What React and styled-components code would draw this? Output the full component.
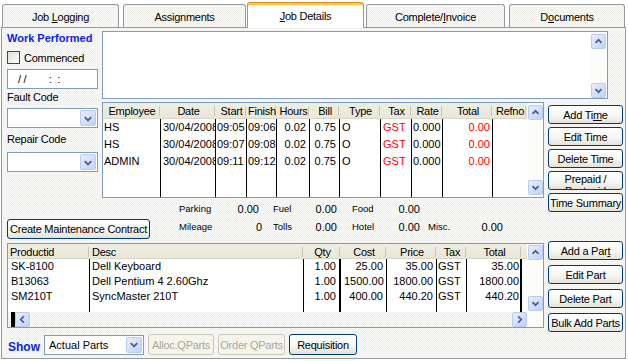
import React from 'react';
import styled, { createGlobalStyle } from 'styled-components';

const GlobalStyle = createGlobalStyle`
  html, body { margin: 0; padding: 0; background: #ffffff; }
  body { font-family: 'Liberation Sans', Arial, sans-serif; font-size: 11px; color: #000; }
`;

const dotted = 'repeating-conic-gradient(#eeede7 0% 25%, #fbfbf9 0% 50%) 0 0 / 2px 2px';

const timeCols = [
  { label: 'Employee', w: 58, align: 'left', pad: 1, line: 1 },
  { label: 'Date', w: 55, align: 'left', pad: 2, line: 1 },
  { label: 'Start', w: 31, align: 'left', pad: 1, line: 1 },
  { label: 'Finish', w: 30, align: 'left', pad: 1, line: 1 },
  { label: 'Hours', w: 33, align: 'right', pad: 3, line: 1 },
  { label: 'Bill', w: 30, align: 'right', pad: 3, line: 1 },
  { label: 'Type', w: 41, align: 'left', pad: 2, line: 1 },
  { label: 'Tax', w: 31, align: 'left', pad: 2, line: 1, color: '#ff0000' },
  { label: 'Rate', w: 31, align: 'left', pad: 1, line: 1 },
  { label: 'Total', w: 50, align: 'right', pad: 2, line: 1, color: '#ff0000' },
  { label: 'Refno', w: 34, align: 'left', pad: 2, line: 0 },
];

const timeRows = [
  ['HS', '30/04/2008', '09:05', '09:06', '0.02', '0.75', 'O', 'GST', '0.000', '0.00', ''],
  ['HS', '30/04/2008', '09:07', '09:08', '0.02', '0.75', 'O', 'GST', '0.000', '0.00', ''],
  ['ADMIN', '30/04/2008', '09:11', '09:12', '0.02', '0.75', 'O', 'GST', '0.000', '0.00', ''],
];

const partCols = [
  { label: 'Productid', w: 82, align: 'left', hAlign: 'left', pad: 3, line: 1 },
  { label: 'Desc', w: 214, align: 'left', hAlign: 'left', pad: 2, line: 1 },
  { label: 'Qty', w: 37, align: 'right', pad: 3, line: 2 },
  { label: 'Cost', w: 46, align: 'right', pad: 3, line: 1 },
  { label: 'Price', w: 50, align: 'right', pad: 3, line: 1 },
  { label: 'Tax', w: 30, align: 'left', pad: 1, line: 1 },
  { label: 'Total', w: 55, align: 'right', pad: 1, line: 2 },
  { label: '', w: 6, align: 'left', pad: 0, line: 0 },
];

const partRows = [
  ['SK-8100', 'Dell Keyboard', '1.00', '25.00', '35.00', 'GST', '35.00', ''],
  ['B13063', 'Dell Pentium 4 2.60Ghz', '1.00', '1500.00', '1800.00', 'GST', '1800.00', ''],
  ['SM210T', 'SyncMaster 210T', '1.00', '400.00', '440.20', 'GST', '440.20', ''],
];

const Chevron = ({ dir }) => {
  const pts = {
    up: '4,9 7.5,5.5 11,9',
    down: '4,6 7.5,9.5 11,6',
    left: '9,4 5.5,7.5 9,11',
    right: '6,4 9.5,7.5 6,11',
  }[dir];
  return (
    <svg width="15" height="15" viewBox="0 0 15 15">
      <polyline points={pts} fill="none" stroke="#4d6185" strokeWidth="2" />
    </svg>
  );
};

const Root = styled.div`
  width: 628px;
  height: 361px;
  overflow: hidden;
  background: #ffffff;
`;

const TabBar = styled.div`
  display: flex;
  align-items: flex-end;
  height: 27px;
  padding-left: 2px;
`;

const Tab = styled.div`
  box-sizing: border-box;
  width: ${p => p.$w}px;
  margin-left: ${p => p.$ml || 0}px;
  height: 23px;
  padding-top: 2px;
  border: 1px solid #919b9c;
  border-bottom: none;
  border-radius: 3px 3px 0 0;
  background: ${dotted};
  display: flex;
  align-items: center;
  justify-content: center;
  letter-spacing: -0.25px;
  white-space: pre;
`;

const ActiveTab = styled(Tab)`
  height: 26px;
  margin-bottom: -1px;
  padding-top: 1px;
  background: #ffffff;
  border-top: 1px solid #e68b2c;
  box-shadow: inset 0 2px 0 #ffc73c;
  position: relative;
  z-index: 1;
`;

const Panel = styled.div`
  box-sizing: border-box;
  width: 625px;
  margin-left: 1px;
  padding: 3px 1px 3px 5px;
  border: 1px solid #919b9c;
  background: ${dotted};
  display: grid;
  grid-template-columns: 91px 442px 75px;
  grid-template-rows: 68px 99px 43px 92px 22px;
  column-gap: 4px;
  grid-template-areas:
    "side memo memo"
    "side time tbtn"
    "exp exp tbtn"
    "parts parts pbtn"
    "bar bar bar";
`;

const Side = styled.div`
  grid-area: side;
  display: flex;
  flex-direction: column;
  letter-spacing: -0.25px;
`;

const GroupTitle = styled.div`
  font-weight: bold;
  color: #0a24e6;
  line-height: 15px;
  letter-spacing: 0;
`;

const CheckRow = styled.label`
  display: flex;
  align-items: center;
  gap: 4px;
  height: 13px;
  margin-top: 5px;
`;

const CheckBox = styled.span`
  box-sizing: border-box;
  width: 13px;
  height: 13px;
  border: 1px solid #1c5180;
  background: linear-gradient(135deg, #dcdcd7, #ffffff);
`;

const Field = styled.div`
  box-sizing: border-box;
  height: 20px;
  margin-top: ${p => p.$mt || 0}px;
  border: 1px solid #7f9db9;
  background: #ffffff;
  display: flex;
  align-items: center;
`;

const DateText = styled.span`
  padding-left: 10px;
  white-space: pre;
`;

const FieldText = styled.span`
  flex: 1;
  padding-left: ${p => p.$pad || 3}px;
  white-space: nowrap;
  overflow: hidden;
`;

const Label = styled.div`
  line-height: 14px;
  margin-top: ${p => p.$mt || 0}px;
`;

const ArrowBtn = styled.span`
  box-sizing: border-box;
  width: ${p => p.$w || 15}px;
  height: ${p => p.$h || 15}px;
  flex: none;
  margin: ${p => p.$m || 0};
  border: 1px solid #b8cbf6;
  border-radius: 2px;
  background: linear-gradient(135deg, #e8effd, #bfd1fb);
  display: flex;
  align-items: center;
  justify-content: center;
  svg { display: block; }
`;

const Memo = styled.div`
  grid-area: memo;
  box-sizing: border-box;
  width: 506px;
  height: 68px;
  border: 1px solid #7f9db9;
  background: #ffffff;
  display: flex;
`;

const MemoText = styled.div`
  flex: 1;
`;

const VScroll = styled.div`
  width: 15px;
  flex: none;
  padding: ${p => p.$pad || '2px 1px'};
  display: flex;
  flex-direction: column;
  justify-content: space-between;
  background: #fcfcfa;
`;

const GridBox = styled.div`
  grid-area: ${p => p.$area};
  box-sizing: border-box;
  height: ${p => p.$h}px;
  margin-top: ${p => p.$mt || 0}px;
  border: 1px solid #7f9db9;
  background: #ffffff;
  display: flex;
  overflow: hidden;
`;

const GridMain = styled.div`
  flex: 1;
  min-width: 0;
  display: flex;
  flex-direction: column;
`;

const HeadRow = styled.div`
  display: flex;
  height: ${p => p.$h}px;
  flex: none;
  background: linear-gradient(#efeee3, #e8e6d7);
  box-shadow: inset 0 -1px 0 #d9d6c6;
  letter-spacing: -0.25px;
`;

const HeadCell = styled.div`
  box-sizing: border-box;
  width: ${p => p.$w}px;
  flex: none;
  padding: 0 2px;
  display: flex;
  align-items: center;
  justify-content: ${p => (p.$align === 'left' ? 'flex-start' : 'center')};
  white-space: nowrap;
  overflow: hidden;
  background: ${p => (p.$sep ? 'linear-gradient(#c9c6b4, #c9c6b4) right 1px center / 1px 10px no-repeat' : 'none')};
`;

const Body = styled.div`
  flex: 1;
  display: flex;
  min-height: 0;
`;

const BodyCol = styled.div`
  box-sizing: border-box;
  width: ${p => p.$w}px;
  flex: none;
  border-right: ${p => (p.$line ? `${p.$line}px solid #000` : 'none')};
  overflow: hidden;
`;

const Cell = styled.div`
  height: ${p => p.$h}px;
  line-height: ${p => p.$h}px;
  padding: 0 ${p => p.$pad}px;
  text-align: ${p => p.$align};
  color: ${p => p.$color || '#000'};
  white-space: nowrap;
  overflow: hidden;
`;

const HScroll = styled.div`
  height: 15px;
  flex: none;
  display: flex;
  align-items: center;
  padding-left: 3px;
  background: ${dotted};
`;

const ThumbMark = styled.span`
  width: 4px;
  height: 15px;
  background: #000;
`;

const Gap = styled.span`
  flex: 1;
`;

const BtnStack = styled.div`
  grid-area: ${p => p.$area};
  display: flex;
  flex-direction: column;
  gap: ${p => p.$gap}px;
  padding-top: ${p => p.$pt || 0}px;
`;

const Btn = styled.button`
  box-sizing: border-box;
  width: ${p => (p.$w ? `${p.$w}px` : '100%')};
  height: ${p => p.$h || 19}px;
  flex: none;
  padding: 0;
  margin-top: ${p => p.$mt || 0}px;
  border: 1px solid ${p => (p.disabled ? '#c9c7ba' : '#003c74')};
  border-radius: 3px;
  background: ${p => (p.disabled ? '#f5f4ea' : 'linear-gradient(#ffffff, #f5f5f1 60%, #e4e1d7)')};
  color: ${p => (p.disabled ? '#aca899' : '#000')};
  font: inherit;
  letter-spacing: -0.25px;
  white-space: nowrap;
  overflow: hidden;
`;

const WrapBtn = styled(Btn)`
  display: flex;
  flex-direction: column;
  align-items: center;
  justify-content: flex-start;
  white-space: normal;
  line-height: 12px;
  padding-top: 1px;
`;

const ExpenseArea = styled.div`
  grid-area: exp;
  display: flex;
  align-items: flex-start;
`;

const ExpenseGrid = styled.div`
  display: grid;
  grid-template-columns: 40px 43px 43px 32px 41px 42px 42px 41px;
  grid-auto-rows: 18px;
  margin: 2px 0 0 29px;
`;

const ExpLabel = styled.span`
  font-size: 9.5px;
  padding-left: ${p => p.$indent || 0}px;
  line-height: 18px;
  white-space: nowrap;
`;

const ExpValue = styled.span`
  text-align: right;
  line-height: 18px;
  padding-right: ${p => p.$pr || 0}px;
`;

const BottomBar = styled.div`
  grid-area: bar;
  display: flex;
  align-items: center;
  padding: 1px 0 0 1px;
  gap: 4px;
`;

const ShowLabel = styled.span`
  font-weight: bold;
  font-size: 12px;
  color: #0a24e6;
  margin-top: 4px;
`;

function Select({ text, width, mt }) {
  return (
    <Field $mt={mt} style={{ width }}>
      <FieldText $pad={4}>{text}</FieldText>
      <ArrowBtn $w={16} $h={16} $m="0 1px 0 0">
        <Chevron dir="down" />
      </ArrowBtn>
    </Field>
  );
}

function DataGrid({ area, cols, rows, height, mt, headH, rowH, hscroll }) {
  return (
    <GridBox $area={area} $h={height} $mt={mt}>
      <GridMain>
        <HeadRow $h={headH}>
          {cols.map((c, i) => (
            <HeadCell key={i} $w={c.w} $align={c.hAlign} $sep={c.label !== ''}>
              {c.label}
            </HeadCell>
          ))}
        </HeadRow>
        <Body>
          {cols.map((c, i) => (
            <BodyCol key={i} $w={c.w} $line={c.line}>
              {rows.map((r, j) => (
                <Cell key={j} $h={rowH} $align={c.align} $pad={c.pad} $color={c.color}>
                  {r[i]}
                </Cell>
              ))}
            </BodyCol>
          ))}
        </Body>
        {hscroll && (
          <HScroll>
            <ThumbMark />
            <ArrowBtn>
              <Chevron dir="left" />
            </ArrowBtn>
            <Gap />
            <ArrowBtn>
              <Chevron dir="right" />
            </ArrowBtn>
          </HScroll>
        )}
      </GridMain>
      <VScroll $pad={hscroll ? '1px 0 16px 1px' : '2px 0 2px 1px'}>
        <ArrowBtn>
          <Chevron dir="up" />
        </ArrowBtn>
        <ArrowBtn>
          <Chevron dir="down" />
        </ArrowBtn>
      </VScroll>
    </GridBox>
  );
}

export default function App() {
  return (
    <Root>
      <GlobalStyle />
      <TabBar>
        <Tab $w={117}><span>Job <u>L</u>ogging</span></Tab>
        <Tab $w={123} $ml={4}><span>Assi<u>g</u>nments</span></Tab>
        <ActiveTab $w={117} $ml={1}><span><u>J</u>ob Details</span></ActiveTab>
        <Tab $w={139} $ml={2}><span>Complete/<u>I</u>nvoice</span></Tab>
        <Tab $w={116} $ml={4}><span>D<u>o</u>cuments</span></Tab>
      </TabBar>
      <Panel>
        <Side>
          <GroupTitle>Work Performed</GroupTitle>
          <CheckRow>
            <CheckBox />
            <span>Commenced</span>
          </CheckRow>
          <Field $mt={5}>
            <DateText>{'/ /        :  :'}</DateText>
          </Field>
          <Label $mt={1}>Fault Code</Label>
          <Select mt={4} />
          <Label $mt={4}>Repair Code</Label>
          <Select mt={6} />
        </Side>

        <Memo>
          <MemoText />
          <VScroll $pad="2px 1px 0 1px">
            <ArrowBtn>
              <Chevron dir="up" />
            </ArrowBtn>
            <ArrowBtn>
              <Chevron dir="down" />
            </ArrowBtn>
          </VScroll>
        </Memo>

        <DataGrid area="time" cols={timeCols} rows={timeRows} height={96} mt={3} headH={16} rowH={17} />

        <BtnStack $area="tbtn" $gap={3} $pt={6}>
          <Btn>Add Ti<u>m</u>e</Btn>
          <Btn>Edit Time</Btn>
          <Btn>Delete Time</Btn>
          <WrapBtn>Prepaid / Postpaid</WrapBtn>
          <Btn>Time Summary</Btn>
        </BtnStack>

        <ExpenseArea>
          <Btn $w={143} $h={20} $mt={21}>Create Maintenance Contract</Btn>
          <ExpenseGrid>
            <ExpLabel>Parking</ExpLabel>
            <ExpValue $pr={3}>0.00</ExpValue>
            <ExpLabel $indent={11}>Fuel</ExpLabel>
            <ExpValue>0.00</ExpValue>
            <ExpLabel $indent={15}>Food</ExpLabel>
            <ExpValue>0.00</ExpValue>
            <ExpLabel />
            <ExpValue />
            <ExpLabel>Mileage</ExpLabel>
            <ExpValue>0</ExpValue>
            <ExpLabel $indent={11}>Tolls</ExpLabel>
            <ExpValue>0.00</ExpValue>
            <ExpLabel $indent={15}>Hotel</ExpLabel>
            <ExpValue>0.00</ExpValue>
            <ExpLabel $indent={8}>Misc.</ExpLabel>
            <ExpValue>0.00</ExpValue>
          </ExpenseGrid>
        </ExpenseArea>

        <DataGrid area="parts" cols={partCols} rows={partRows} height={85} mt={2} headH={15} rowH={15} hscroll />

        <BtnStack $area="pbtn" $gap={5}>
          <Btn>Add a Par<u>t</u></Btn>
          <Btn>Edit Part</Btn>
          <Btn>Delete Part</Btn>
          <Btn>Bulk Add Parts</Btn>
        </BtnStack>

        <BottomBar>
          <ShowLabel>Show</ShowLabel>
          <Select text="Actual Parts" width="100px" />
          <Btn $w={66} $h={21} disabled>Alloc.QParts</Btn>
          <Btn $w={67} $h={21} disabled>Order QParts</Btn>
          <Btn $w={68} $h={21}>Requisition</Btn>
        </BottomBar>
      </Panel>
    </Root>
  );
}
